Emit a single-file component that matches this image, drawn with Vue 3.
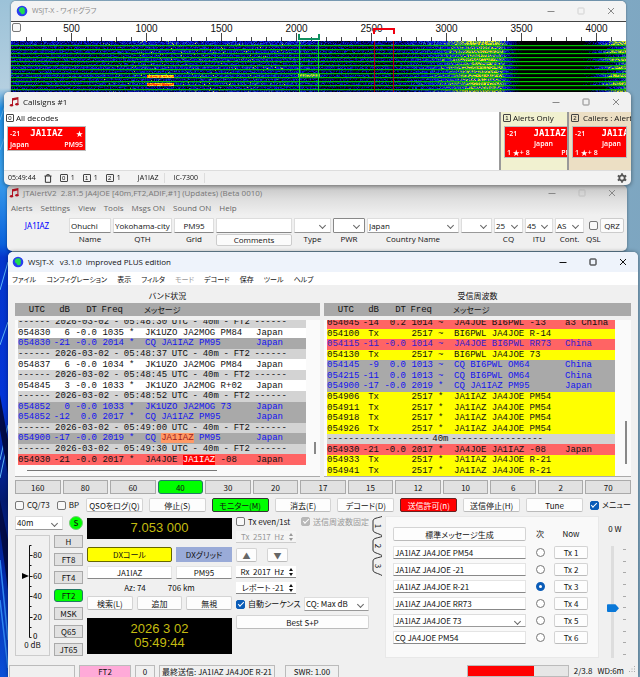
<script setup>
import { h, onMounted, ref } from 'vue'

const WinControls = (props) =>
  h('div', { class: 'win-controls' }, [
    h('button', { type: 'button', 'aria-label': 'Minimize' }, h('svg', { viewBox: '0 0 8 8' }, h('path', { d: 'M.5 4.5h7' }))),
    h('button', { type: 'button', 'aria-label': 'Maximize', class: { faint: props.fixed } }, h('svg', { viewBox: '0 0 8 8' }, h('rect', { x: 1, y: 1, width: 6, height: 6, rx: 0.6 }))),
    h('button', { type: 'button', 'aria-label': 'Close' }, h('svg', { viewBox: '0 0 8 8' }, h('path', { d: 'M1 1l6 6M7 1l-6 6' })))
  ])
WinControls.props = { fixed: Boolean }

const NoteIcon = () =>
  h('svg', { viewBox: '0 0 10 10', width: 10, height: 10 }, [
    h('path', { d: 'M3 1.3 9.4 0v7.4h-1V2.6L4 3.5v5H3z', fill: '#b01020' }),
    h('ellipse', { cx: 2.5, cy: 8.3, rx: 1.7, ry: 1.3, fill: '#b01020' }),
    h('ellipse', { cx: 7.9, cy: 7.3, rx: 1.7, ry: 1.3, fill: '#b01020' })
  ])

const GlobeIcon = () =>
  h('svg', { viewBox: '0 0 12 12', width: 12, height: 12 }, [
    h('circle', { cx: 6, cy: 6, r: 5.3, fill: '#2a3ef0' }),
    h('path', { d: 'M3.5 3.2C5 1.8 7.6 2 8.6 3.4c.8 1.2-.2 2.2.2 3.4.4 1.4-1 2.6-2.4 2.4C4.8 9 5 7.5 3.9 6.9 2.6 6.1 2.5 4.2 3.5 3.2z', fill: '#1fdc50' })
  ])

const waterfall = ref(null)
const freqLabels = [500, 1000, 1500, 2000, 2500, 3000, 3500, 4000]

const stops = [
  [0, 0, 0, 0], [0.18, 0, 0, 90], [0.42, 10, 20, 225], [0.56, 40, 90, 180],
  [0.68, 100, 165, 70], [0.82, 205, 225, 50], [0.95, 250, 230, 40], [1.1, 255, 70, 0]
]
function palette(v) {
  if (v <= 0) return [0, 0, 0]
  for (let i = 1; i < stops.length; i++) {
    if (v <= stops[i][0]) {
      const a = stops[i - 1], b = stops[i]
      const t = (v - a[0]) / (b[0] - a[0])
      return [1, 2, 3].map((k) => a[k] + (b[k] - a[k]) * t)
    }
  }
  return [255, 60, 0]
}
function drawWaterfall(canvas) {
  const ctx = canvas.getContext('2d')
  const w = canvas.width, ht = canvas.height
  const img = ctx.createImageData(w, ht)
  let seed = 7919
  const rnd = () => ((seed = (seed * 1664525 + 1013904223) >>> 0) / 4294967296)
  for (let y = 0; y < ht; y++) {
    const dim = (y % 8 > 4 ? -0.08 : 0.01) + (rnd() - 0.5) * 0.06
    const onset = 568 + (y % 8 > 4 ? 18 : 0) + rnd() * 6
    for (let x = 0; x < w; x++) {
      let base = 0.27 + dim
      let spread = 0.3
      if (x > 120 && x < 290) base += 0.06
      if (x > 290 && x < 400) base -= 0.05
      if (x >= 288 && x <= 307) base += 0.08
      const d = (x - 474) / (x < 474 ? 44 : 28)
      base += 0.5 * Math.exp(-d * d)
      if (x > 490) {
        const fall = Math.min(1, (x - 490) / 24)
        base = base * (1 - fall) - 0.1 * fall
        spread *= 1 - fall * 0.85
      }
      if (x > onset) {
        const rise = Math.min(1, (x - onset) / 34)
        base += 0.85 * rise
        spread = 0.3
      }
      let v = base + (rnd() + rnd() - 1) * spread
      if (rnd() > 0.96 && x < 280 && x > 90) v += 0.35
      const c = palette(v)
      const i = (y * w + x) * 4
      img.data[i] = c[0]
      img.data[i + 1] = c[1]
      img.data[i + 2] = c[2]
      img.data[i + 3] = 255
    }
  }
  ctx.putImageData(img, 0, 0)
  for (let y = 4; y < ht; y += 4) {
    ctx.fillStyle = '#00c400'
    ctx.fillRect(0, y, w, 1)
    ctx.fillStyle = 'rgba(0,110,0,.4)'
    ctx.fillRect(0, y + 1, w, 1)
  }
  const signal = (x0, x1, y0, low) => {
    for (let y = y0; y < y0 + 3; y++) {
      for (let x = x0; x < x1; x++) {
        const c = palette(low + rnd() * 0.25 + (y === y0 + 1 ? 0.1 : 0))
        ctx.fillStyle = `rgb(${c.map(Math.round).join(',')})`
        ctx.fillRect(x, y, 1, 1)
      }
    }
  }
  signal(136, 163, 34, 0.82)
  signal(136, 163, 42, 0.9)
  signal(287, 309, 33, 0.55)
  ctx.fillStyle = '#10d030'
  ctx.fillRect(288, 0, 1, ht)
  ctx.fillRect(307, 0, 1, ht)
  ctx.fillStyle = '#b00008'
  ctx.fillRect(363, 0, 1, ht)
  ctx.fillRect(382, 0, 1, ht)
}
onMounted(() => drawWaterfall(waterfall.value))

const sep = (t) => ({ sep: ['------', '2026-03-02', '-', t, 'UTC', '-', '40m', '-', 'FT2', '------'] })
const line = (utc, db, dt, freq, mark, msg, country, tone) => ({ utc, db, dt, freq, mark, msg: [].concat(msg), country, tone })

const bandRows = [
  sep('05:48:30'),
  line('054830', '6', '-0.0', '1035', '*', 'JK1UZO JA2MOG PM84', 'Japan', ''),
  line('054830', '-21', '-0.0', '2014', '*', 'CQ JA1IAZ PM95', 'Japan', 'gray'),
  sep('05:48:37'),
  line('054837', '6', '-0.0', '1034', '*', 'JK1UZO JA2MOG PM84', 'Japan', ''),
  sep('05:48:45'),
  line('054845', '3', '-0.0', '1033', '*', 'JK1UZO JA2MOG R+02', 'Japan', ''),
  sep('05:48:52'),
  line('054852', '0', '-0.0', '1033', '*', 'JK1UZO JA2MOG 73', 'Japan', 'gray'),
  line('054852', '-12', '0.0', '2017', '*', 'CQ JA1IAZ PM95', 'Japan', 'gray'),
  sep('05:49:00'),
  line('054900', '-17', '-0.0', '2019', '*', ['CQ ', { t: 'JA1IAZ', c: 'mark-orange' }, ' PM95'], 'Japan', 'gray'),
  sep('05:49:30'),
  line('054930', '-21', '-0.0', '2017', '*', ['JA4JOE ', { t: 'JA1IAZ', c: 'mark-red' }, ' -08'], 'Japan', 'red')
]
const rxRows = [
  line('054045', '-14', '0.2', '1014', '~', 'JA4JOE BI6PWL -13', 'a3 China', 'red'),
  line('054100', 'Tx', '', '2517', '~', 'BI6PWL JA4JOE R-14', '', 'yellow'),
  line('054115', '-11', '-0.0', '1014', '~', 'JA4JOE BI6PWL RR73', 'China', 'red blue'),
  line('054130', 'Tx', '', '2517', '~', 'BI6PWL JA4JOE 73', '', 'yellow'),
  line('054145', '-9', '0.0', '1013', '~', 'CQ BI6PWL OM64', 'China', 'gray'),
  line('054215', '-11', '0.0', '1013', '~', 'CQ BI6PWL OM64', 'China', 'gray'),
  line('054900', '-17', '-0.0', '2019', '*', 'CQ JA1IAZ PM95', 'Japan', 'gray'),
  line('054906', 'Tx', '', '2517', '*', 'JA1IAZ JA4JOE PM54', '', 'yellow'),
  line('054911', 'Tx', '', '2517', '*', 'JA1IAZ JA4JOE PM54', '', 'yellow'),
  line('054918', 'Tx', '', '2517', '*', 'JA1IAZ JA4JOE PM54', '', 'yellow'),
  line('054926', 'Tx', '', '2517', '*', 'JA1IAZ JA4JOE PM54', '', 'yellow'),
  { sep: ['-------------------', '40m', '-----------------'], short: true },
  line('054930', '-21', '-0.0', '2017', '*', 'JA4JOE JA1IAZ -08', 'Japan', 'red'),
  line('054933', 'Tx', '', '2517', '*', 'JA1IAZ JA4JOE R-21', '', 'yellow'),
  line('054941', 'Tx', '', '2517', '*', 'JA1IAZ JA4JOE R-21', '', 'yellow')
]
const panes = [
  { title: 'バンド状況', rows: bandRows, cls: 'band' },
  { title: '受信周波数', rows: rxRows, cls: 'rx' }
]

const alertMenu = ['Alerts', 'Settings', 'View', 'Tools', 'Msgs ON', 'Sound ON', 'Help']
const mainMenu = ['ファイル', 'コンフィグレーション', '表示', 'フィルタ', 'モード', 'デコード', '保存', 'ツール', 'ヘルプ']
const bands = ['160', '80', '60', '40', '30', '20', '17', '15', '12', '10', '6', '2', '70']
const actions = [
  { t: 'QSOをログ(Q)' }, { t: '停止(S)' }, { t: 'モニター(M)', c: 'on' }, { t: '消去(E)' },
  { t: 'デコード(D)' }, { t: '送信許可(n)', c: 'tx' }, { t: '送信停止(H)' }, { t: 'Tune' }
]
const modes = ['H', 'FT8', 'FT4', 'FT2', 'MSK', 'Q65', 'JT65']
const messages = ['JA1IAZ JA4JOE PM54', 'JA1IAZ JA4JOE -21', 'JA1IAZ JA4JOE R-21', 'JA1IAZ JA4JOE RR73', 'JA1IAZ JA4JOE 73', 'CQ JA4JOE PM54']
const nextTx = ref(3)
</script>

<template>
  <div class="desktop">
    <svg class="wallpaper" viewBox="0 0 12 677" preserveAspectRatio="none" aria-hidden="true">
      <defs>
        <linearGradient id="wp" x1="0" y1="0" x2="0" y2="1">
          <stop offset="0" stop-color="#9cc2d8" />
          <stop offset=".13" stop-color="#b4cfe0" />
          <stop offset=".16" stop-color="#1f8fe6" />
          <stop offset=".26" stop-color="#3ba0ec" />
          <stop offset=".36" stop-color="#0a62dc" />
          <stop offset=".38" stop-color="#0436cc" />
          <stop offset=".6" stop-color="#0334d8" />
          <stop offset=".74" stop-color="#031a70" />
          <stop offset=".84" stop-color="#0328a8" />
          <stop offset="1" stop-color="#0a50d8" />
        </linearGradient>
      </defs>
      <rect width="12" height="677" fill="url(#wp)" />
      <path d="M0 120 8 96M0 150 8 128M0 290 8 262M0 345 8 322M0 460 8 425M0 478 8 440" stroke="#5db4f4" stroke-width="1" fill="none" />
      <path d="M0 395 8 440 8 475 0 430zM0 500 8 540 8 590 0 530z" fill="#020c48" />
      <path d="M0 560 8 640M0 600 8 668" stroke="#2f86f0" stroke-width="1.5" fill="none" />
    </svg>

    <section class="window graph">
      <header class="titlebar"><GlobeIcon /><h2>WSJT-X - ワイドグラフ</h2><WinControls fixed /></header>
      <div class="ruler">
        <input type="checkbox" class="check" aria-label="Controls">
        <div class="ruler-labels"><span v-for="f in freqLabels" :key="f">{{ f }}</span></div>
        <svg viewBox="0 0 615 19" preserveAspectRatio="none" aria-hidden="true">
          <path v-for="n in 40" :key="n" :d="`M${n * 15 + .5} ${n % 5 === 4 ? 11 : 15}V19`" stroke="#444" />
          <path d="M288 12v5h20v-5" fill="none" stroke="#109060" stroke-width="2" />
          <path d="M363 12V7h20v5" fill="none" stroke="#f00010" stroke-width="2" />
        </svg>
      </div>
      <canvas ref="waterfall" width="615" height="51"></canvas>
    </section>

    <section class="window callsigns">
      <header class="titlebar"><NoteIcon /><h2>Callsigns #1</h2><WinControls /></header>
      <div class="call-panels">
        <div class="call-panel">
          <h3><i class="num">0</i>All decodes</h3>
          <div class="card wide">
            <span>-21</span><b>JA1IAZ</b><span class="end">★</span>
            <div class="foot"><span>Japan</span><span>PM95</span></div>
          </div>
        </div>
        <div class="call-panel alerts">
          <h3><i class="num">1</i>Alerts Only</h3>
          <div class="card tall">
            <span>-21</span><b>JA1IAZ</b>
            <span class="mid">Japan</span>
            <div class="foot"><span>1 ★+ 8</span><span>PM95</span></div>
          </div>
        </div>
        <div class="call-panel callers">
          <h3><i class="num">2</i><svg viewBox="0 0 6 8" width="5" height="7"><path d="M1 .5h4M1.7.5v3.500M4.3.5v3.500M.5 4.500h5M3 4.500v3.500" stroke="#333" fill="none" /></svg>Callers : Alerts</h3>
          <div class="card tall">
            <span>-21</span><b>JA1IAZ</b>
            <span class="mid">Japan</span>
            <div class="foot"><span>1 ★+ 8</span></div>
          </div>
        </div>
      </div>
      <footer class="call-status">
        <span class="time">05:49:44</span>
        <svg viewBox="0 0 8 9" width="8" height="9"><path d="M.5 2h7M2.8 2V.7h2.400V2M1.4 2v6.300h5.200V2" fill="none" stroke="#333" /></svg>
        <span><i class="num">0</i>1</span><span><i class="num">1</i>1</span><span><i class="num">2</i>1</span>
        <span class="cell first">JA1IAZ</span><span class="cell">IC-7300</span>
        <svg class="gear" viewBox="0 0 10 10" width="10" height="10"><circle cx="5" cy="5" r="2.7" fill="none" stroke="#555" stroke-width="1.8" /><path d="M5 .2v1.800M5 8v1.800M.8 2.600l1.600.9M7.600 6.500l1.600.9M.8 7.400l1.600-.9M7.600 3.500l1.600-.9" stroke="#555" stroke-width="1.8" /></svg>
      </footer>
    </section>

    <section class="window jtalert">
      <header class="titlebar"><NoteIcon /><h2>JTAlertV2&nbsp; 2.81.5 JA4JOE [40m,FT2,ADIF,#1] (Updates) (Beta 0010)</h2><WinControls fixed /></header>
      <nav class="alert-menu"><a v-for="m in alertMenu" :key="m" href="#">{{ m }}</a></nav>
      <form class="fields">
        <div class="field"><strong class="callsign">JA1IAZ</strong></div>
        <div class="field"><input id="nm" value="Ohuchi"><label for="nm">Name</label></div>
        <div class="field"><input id="qth" value="Yokohama-city"><label for="qth">QTH</label></div>
        <div class="field"><input id="grid" class="center" value="PM95"><label for="grid">Grid</label></div>
        <div class="field"><input aria-label="Comment text"><button type="button" class="comments">Comments</button></div>
        <div class="field"><span class="sel"><select id="type"><option></option></select></span><label for="type">Type</label></div>
        <div class="field"><span class="sel dark"><select id="pwr"><option></option></select></span><label for="pwr">PWR</label></div>
        <div class="field"><span class="sel"><select id="country"><option>Japan</option></select></span><label for="country">Country Name</label></div>
        <div class="field"><span class="sel"><select aria-label="State"><option></option></select></span></div>
        <div class="field"><span class="sel"><select id="cq"><option>25</option></select></span><label for="cq">CQ</label></div>
        <div class="field"><span class="sel"><select id="itu"><option>45</option></select></span><label for="itu">ITU</label></div>
        <div class="field"><span class="sel"><select id="cont"><option>AS</option></select></span><label for="cont">Cont.</label></div>
        <div class="field"><span class="qsl"><input id="qsl" type="checkbox" class="check"></span><label for="qsl">QSL</label></div>
        <div class="field"><button type="button" class="qrz">QRZ</button></div>
      </form>
    </section>

    <main class="window wsjt">
      <header class="titlebar"><GlobeIcon /><h1>WSJT-X&nbsp;&nbsp; v3.1.0&nbsp; improved PLUS edition</h1><WinControls /></header>
      <nav class="main-menu"><a v-for="m in mainMenu" :key="m" href="#" :class="{ off: m === 'モード' }">{{ m }}</a></nav>

      <div class="body">
        <div class="panes">
          <section v-for="p in panes" :key="p.title" class="pane" :class="p.cls">
            <h2>{{ p.title }}</h2>
            <div class="columns"><span>UTC</span><span>dB</span><span>DT</span><span>Freq</span><span class="m">メッセージ</span></div>
            <div class="log">
              <table>
                <colgroup><col class="c-utc"><col class="c-db"><col class="c-dt"><col class="c-freq"><col class="c-mark"><col class="c-msg"><col class="c-country"></colgroup>
                <tbody>
                  <template v-for="(r, i) in p.rows" :key="i">
                    <tr v-if="r.sep" class="sep"><td colspan="7"><div :class="{ short: r.short }"><span v-for="(s, k) in r.sep" :key="k">{{ s }}</span></div></td></tr>
                    <tr v-else :class="r.tone">
                      <td>{{ r.utc }}</td><td class="r">{{ r.db }}</td><td class="r">{{ r.dt }}</td><td class="r">{{ r.freq }}</td><td class="mk">{{ r.mark }}</td>
                      <td><template v-for="(m, k) in r.msg" :key="k"><mark v-if="m.t" :class="m.c">{{ m.t }}</mark><template v-else>{{ m }}</template></template></td>
                      <td>{{ r.country }}</td>
                    </tr>
                  </template>
                </tbody>
              </table>
              <i class="vbar"></i>
              <i v-if="p.cls === 'band'" class="hbar"></i>
            </div>
          </section>
        </div>

        <div class="bands"><button v-for="b in bands" :key="b" type="button" :class="{ on: b === '40' }">{{ b }}</button></div>

        <div class="actions">
          <label><input type="checkbox" class="check">CQ/73</label>
          <label><input type="checkbox" class="check">BP</label>
          <div class="action-buttons"><button v-for="a in actions" :key="a.t" type="button" class="btn" :class="a.c">{{ a.t }}</button></div>
          <label><input type="checkbox" class="check" checked>メニュー</label>
        </div>

        <div class="controls">
          <div class="left-col">
            <div class="band-row"><span class="sel"><select aria-label="Band"><option>40m</option></select></span><button type="button" class="s-btn">S</button></div>
            <div class="meter-row">
              <div class="meter">
                <svg viewBox="0 0 32 104" width="32" height="104" role="img" aria-label="Input level">
                  <path d="M15.5 9.500h-2v92h2M13.5 19.500h3M13.5 29.500h2M13.5 40.500h3M13.5 50.500h2M13.5 60.500h3M13.5 70.500h2M13.5 81.500h3M13.5 91.500h2" fill="none" stroke="#111" />
                  <path d="M6 37v6l7-3z" fill="#000" />
                  <text x="17" y="22">80</text><text x="17" y="43">60</text><text x="17" y="63">40</text><text x="17" y="84">20</text><text x="17" y="103">0</text>
                </svg>
                <span>0 dB</span>
              </div>
              <div class="modes"><button v-for="m in modes" :key="m" type="button" :class="{ on: m === 'FT2' }">{{ m }}</button></div>
            </div>
          </div>

          <div class="dx-col">
            <output class="lcd freq">7.053 000</output>
            <div class="dx-grid">
              <button id="dxc" type="button" class="dx-call">DXコール</button><button id="dxg" type="button" class="dx-square">DXグリッド</button>
              <input class="line center" aria-labelledby="dxc" value="JA1IAZ"><input class="line center" aria-labelledby="dxg" value="PM95">
            </div>
            <p class="azimuth"><span>Az: 74</span><span>706 km</span></p>
            <div class="lookup"><button type="button" class="btn">検索(L)</button><button type="button" class="btn">追加</button><button type="button" class="btn">無視</button></div>
            <output class="lcd clock"><span>2026 3 02</span><span>05:49:44</span></output>
          </div>

          <div class="tx-col">
            <div class="tx-line"><label><input type="checkbox" class="check">Tx even/1st</label><label class="off"><input type="checkbox" class="check" checked disabled>送信周波数固定</label></div>
            <span class="spin off"><input aria-label="Tx frequency" value="Tx  2517  Hz" disabled><i></i></span>
            <div class="arrows"><button type="button" class="btn" aria-label="Up">▲</button><button type="button" class="btn" aria-label="Down">▼</button></div>
            <span class="spin"><input aria-label="Rx frequency" value="Rx  2017  Hz"><i></i></span>
            <span class="spin"><input aria-label="Report" value="レポート -21"><i></i></span>
            <div class="tx-line auto"><label><input type="checkbox" class="check" checked>自動シーケンス</label><span class="sel boxed"><select aria-label="CQ response"><option>CQ: Max dB</option></select></span></div>
            <button type="button" class="btn best">Best S+P</button>
          </div>

          <div class="tabs"><button v-for="n in 3" :key="n" type="button"><svg viewBox="0 0 10 20" width="10" height="20" aria-hidden="true"><path d="M10 .5C6 2 1 2 1 5v9c0 3 5 3 9 5.500" fill="#f0f0f0" stroke="#333" /></svg><span>{{ n }}</span></button></div>

          <div class="msg-panel">
            <button type="button" class="btn gen">標準メッセージ生成</button><span class="head">次</span><span class="head">Now</span>
            <template v-for="(m, i) in messages" :key="i">
              <span v-if="i === 4" class="sel msg-sel"><select :aria-label="`Tx ${i + 1} message`"><option>{{ m }}</option></select></span>
              <input v-else class="line" :aria-label="`Tx ${i + 1} message`" :value="m">
              <input v-model="nextTx" type="radio" name="next" class="radio" :value="i + 1" :aria-label="`Next Tx ${i + 1}`">
              <button type="button" class="btn tx-n">Tx {{ i + 1 }}</button>
            </template>
          </div>

          <div class="power">
            <label for="pwr-slider">0 W</label>
            <div class="slider"><input id="pwr-slider" type="range" min="0" max="100" value="44"><div class="ticks"><i v-for="n in 10" :key="n"></i></div></div>
          </div>
        </div>
      </div>

      <footer class="statusbar">
        <span class="st blank"></span><span class="st mode">FT2</span><span class="st zero">0</span>
        <span class="st last">最終送信: JA1IAZ JA4JOE R-21</span><span class="st swr">SWR: 1.00</span>
        <progress value="2" max="3">2/3</progress>
        <span class="plain">2/3.8</span><span class="plain">WD:6m</span>
        <svg viewBox="0 0 8 8" width="8" height="8" aria-hidden="true"><path d="M6 1h1v1H6zM6 3.500h1v1H6zM6 6h1v1H6zM3.5 3.500h1v1h-1zM3.5 6h1v1h-1zM1 6h1v1H1z" fill="#aaa" /></svg>
      </footer>
    </main>
  </div>
</template>

<style>
body { margin: 0; }
.win-controls { display: flex; margin-left: auto; }
.win-controls button { width: 30px; height: 16px; padding: 0; border: 0; background: none; color: inherit; display: flex; align-items: center; justify-content: center; }
.win-controls svg { width: 8px; height: 8px; fill: none; stroke: currentColor; stroke-width: 1; }
.win-controls .faint { opacity: .3; }
</style>

<style scoped>
* { box-sizing: border-box; }
.desktop { position: relative; overflow: hidden; min-height: 100vh; padding: 252px 2px 0 8px; background: linear-gradient(100deg, #9cc2d8 0%, #84aec8 60%, #7ba3be 100%); font: 8px/10px "Open Sans", "Noto Sans CJK JP", sans-serif; color: #111; }
.wallpaper { position: absolute; left: 0; top: 0; width: 12px; height: 100%; }
button, input, select { font: inherit; color: inherit; margin: 0; min-width: 0; }
button { padding: 0; white-space: nowrap; }
h1, h2, h3, p { margin: 0; font-weight: 400; font-size: inherit; }
a { color: inherit; text-decoration: none; }
i { font-style: normal; }
.window { border-radius: 5px; overflow: hidden; background: #f0f0f0; }
.titlebar { display: flex; align-items: center; gap: 4px; height: 20px; }
.titlebar h1, .titlebar h2 { white-space: nowrap; }

.graph { position: absolute; top: 1px; left: 11px; right: 14px; border-radius: 5px 5px 0 0; box-shadow: 0 0 2px #456; }
.graph .titlebar { background: #f3f3f3; color: #888; padding-left: 5px; font-feature-settings: "palt"; font-size: 7px; }
.ruler { position: relative; height: 20px; background: #fff; border-top: 1px solid #444; overflow: hidden; }
.ruler svg { position: absolute; left: 0; top: 0; width: 100%; height: 19px; }
.ruler .check { position: absolute; left: 1px; top: 1px; z-index: 1; }
.ruler-labels { display: flex; padding-left: 23px; font: 10px/13px "Liberation Sans", sans-serif; }
.ruler-labels span { flex: 0 0 75px; text-align: center; }
.graph canvas { display: block; width: 100%; height: 51px; }

.callsigns { position: absolute; top: 92px; left: 4px; right: 9px; box-shadow: 0 1px 4px #0007; z-index: 2; background: #f3f3f3; }
.callsigns .titlebar { padding-left: 5px; background: #f1f1f1; }
.callsigns .win-controls, .jtalert .win-controls, .graph .win-controls { color: #888; }
.call-panels { display: flex; height: 58px; background: #fff; }
.call-panel { flex: 1; padding: 0 2px; overflow: hidden; }
.call-panel h3 { display: flex; align-items: center; gap: 2px; height: 12px; white-space: nowrap; }
.alerts { flex: 0 0 68px; background: #f1f1d0; border-left: 2px solid #999; }
.callers { flex: 0 0 64px; background: #ecdfc4; border-left: 2px solid #999; }
.num { flex: none; display: inline-block; width: 8px; height: 8px; border: 1px solid #444; border-radius: 1px; font: 6px/6px "Liberation Sans", sans-serif; text-align: center; }
.card { display: grid; grid-template-columns: 14px 45px 14px; align-items: center; margin: 2px 1px; padding: 1px 2px; border: 1px solid #bbb; background: #f00; color: #fff; width: 79px; font-weight: 600; font-size: 7px; line-height: 9px; }
.card b { font: 700 9px/11px "DejaVu Sans Mono", monospace; text-align: right; }
.wide { height: 25px; }
.wide b { text-align: center; }
.end { text-align: right; }
.foot { grid-column: 1 / 4; display: flex; justify-content: space-between; white-space: nowrap; }
.tall { height: 32px; }
.tall .mid { grid-column: 1 / 4; text-align: center; }
.callers .card { width: 55px; overflow: hidden; }
.call-status { display: flex; align-items: center; gap: 8px; height: 15px; padding: 0 4px; font-size: 7px; border-top: 1px solid #ddd; }
.call-status span { display: flex; align-items: center; gap: 3px; }
.cell { padding-right: 6px; border-right: 1px solid #ddd; }
.cell.first { padding-left: 9px; }
.gear { margin-left: auto; }

.jtalert { position: absolute; top: 185px; left: 7px; right: 13px; height: 66px; box-shadow: 0 1px 3px #0006; background: linear-gradient(#c4c4c4, #dedede 14px, #f0f0f0 30px, #f0f0f0); }
.jtalert .titlebar { height: 16px; padding-left: 2px; color: #777; }
.alert-menu { display: flex; gap: 8px; height: 14px; padding-left: 4px; align-items: center; color: #666; }
.fields { display: grid; grid-template-columns: 60px 42px 59px 40px 76px 37px 32px 92px 31px 29px 28px 29px 12px 24px; gap: 2px; padding: 3px 0 0; justify-content: start; }
.field { display: grid; grid-template-rows: 15px 12px; gap: 1px; }
.field > input { width: 100%; height: 15px; border: 1px solid #ddd; border-bottom-color: #888; background: #fff; padding: 0 1px; border-radius: 1px; }
.center { text-align: center; }
.field label { justify-self: center; white-space: nowrap; }
.callsign { color: #00f; font: 8px/15px "Noto Sans", sans-serif; text-align: center; }
.comments, .qrz { background: #fbfbfb; border: 1px solid #ccc; border-radius: 2px; }
.qsl { display: flex; align-items: center; justify-content: center; }

.sel { position: relative; display: block; height: 15px; background: #fff; border: 1px solid #ddd; border-bottom-color: #999; border-radius: 1px; }
.sel.dark { border-color: #888; }
.sel select { display: block; width: 100%; height: 100%; appearance: none; border: 0; background: none; padding: 0 1px; }
.sel::after { content: ""; position: absolute; right: 5px; top: 4px; width: 4px; height: 4px; border: solid #666; border-width: 0 1px 1px 0; transform: rotate(45deg); pointer-events: none; }
.check { appearance: none; flex: none; width: 9px; height: 9px; border: 1px solid #777; border-radius: 2px; background: #f8f8f8; display: grid; place-items: center; }
.check:checked { background: #0a5cb8; border-color: #0a5cb8; }
.check:checked::after { content: ""; width: 5px; height: 2px; border: solid #fff; border-width: 0 0 1px 1px; transform: rotate(-45deg); margin-top: -2px; }
.check:disabled { background: #b8b8b8; border-color: #b8b8b8; }

.wsjt { position: relative; font-family: "Noto Sans CJK JP", sans-serif; box-shadow: 0 0 4px #0006; border-radius: 5px 5px 0 0; }
.wsjt .titlebar { background: #eef3fb; padding-left: 4px; font-family: "Open Sans", sans-serif; }
.main-menu { display: flex; gap: 10px; height: 13px; padding: 0 4px; align-items: center; background: #fff; font-size: 7px; font-feature-settings: "palt"; }
.off { color: #999; }
.body { padding: 4px 7px 0; }
.panes { display: grid; grid-template-columns: 305px 1fr; gap: 4px; }
.pane h2 { height: 14px; line-height: 13px; text-align: center; font-feature-settings: "palt"; }
.columns { display: grid; grid-template-columns: 30px 25px 27px 26px 1fr; height: 13px; align-items: center; background: #a9a9a9; font: 9px/12px "Liberation Mono", monospace; text-align: right; }
.columns span { white-space: nowrap; }
.columns .m { text-align: left; padding-left: 21px; font-family: "Noto Sans CJK JP", sans-serif; font-size: 8px; font-feature-settings: "palt"; }
.log { position: relative; display: flex; align-items: flex-end; height: 157px; margin-top: 4px; padding-left: 3px; overflow: hidden; border-bottom: 1px solid #aaa; background: #fafafa; }
.log table { width: 288px; border-collapse: collapse; table-layout: fixed; font: 9px/10px "Liberation Mono", monospace; background: #fff; }
.band table { height: 148px; margin-bottom: 11px; }
.rx table { height: 158px; }
.c-utc { width: 33px; } .c-db { width: 19px; } .c-dt { width: 27px; } .c-freq { width: 27px; } .c-mark { width: 21px; } .c-msg { width: 111px; } .c-country { width: 50px; }
td { padding: 0; white-space: pre; }
.r { text-align: right; }
.mk { padding-left: 5px; }
.gray { background: #a9a9a9; color: #1414f0; }
.red { background: #ff6464; }
.red.blue { color: #3020d0; }
.yellow { background: #ff0; }
.sep { background: #d3d3d3; }
.sep div { display: flex; justify-content: space-between; width: 269px; }
.sep .short { width: 216px; }
mark { color: inherit; }
.mark-orange { background: #ff9966; color: #a02020; }
.mark-red { background: #f00; color: #fff; }
.vbar { position: absolute; right: 4px; bottom: 22px; width: 2px; height: 12px; background: #888; }
.rx .vbar { bottom: 12px; height: 43px; }
.hbar { position: absolute; left: 12px; bottom: 5px; width: 190px; height: 1px; background: #777; }

.bands { display: grid; grid-template-columns: repeat(13, 1fr); gap: 2px; margin-top: 3px; }
.bands button, .modes button { height: 14px; border: 1px solid #aaa; background: #e1e1e1; line-height: 11px; }
.bands .on, .modes .on { background: #0f0; border-color: #276; border-radius: 3px; }
.actions { display: flex; align-items: center; gap: 7px; margin-top: 4px; font-feature-settings: "palt"; }
.actions label, .tx-line label { display: flex; align-items: center; gap: 3px; white-space: nowrap; }
.action-buttons { flex: 1; display: grid; grid-template-columns: repeat(8, 1fr); gap: 6px; }
.btn { height: 14px; border: 1px solid #d4d4d4; border-bottom-color: #bbb; border-radius: 2px; background: #fdfdfd; line-height: 11px; font-feature-settings: "palt"; }
.btn.on { background: #0f0; border-color: #333; }
.btn.tx { background: #f00; border-color: #622; color: #fff; }

.controls { display: grid; grid-template-columns: 68px 149px 139px 14px 214px 1fr; margin-top: 4px; height: 141px; }
.band-row { display: flex; align-items: center; justify-content: space-between; width: 68px; }
.band-row .sel { width: 48px; height: 14px; }
.s-btn { width: 14px; height: 14px; border: 1px solid #7c7; border-radius: 50%; background: #0f0; font-weight: 500; line-height: 12px; }
.meter-row { display: flex; justify-content: space-between; margin-top: 5px; }
.meter { width: 35px; height: 121px; border: 1px solid #ccc; text-align: center; }
.meter svg, .meter span { display: block; }
.meter text { font-size: 8px; }
.modes { display: grid; gap: 5px; width: 29px; align-content: space-between; }
.modes button { height: 13px; line-height: 10px; }

.dx-col { display: flex; flex-direction: column; margin-left: 4px; }
.lcd { display: block; background: #000; color: #c4bc10; text-align: center; font: 13px/20px "Liberation Sans", sans-serif; }
.freq { margin-top: 2px; height: 21px; }
.dx-grid { display: grid; grid-template-columns: 85px 1fr; gap: 4px; margin-top: 8px; }
.dx-grid button { height: 15px; line-height: 12px; font-feature-settings: "palt"; }
.dx-call { background: #ff0; border: 1px solid #660; border-radius: 2px; }
.dx-square { background: #9aabd8; border: 0; }
.line { width: 100%; height: 13px; padding: 0 1px; border: 1px solid #e4e4e4; border-bottom-color: #888; background: #fff; }
.azimuth { display: flex; justify-content: center; gap: 22px; padding-top: 4px; height: 17px; }
.lookup { display: grid; grid-template-columns: repeat(3, 1fr); gap: 4px; }
.clock { display: flex; flex-direction: column; margin-top: 8px; padding: 4px 0; line-height: 14px; }

.tx-col { display: flex; flex-direction: column; align-items: flex-start; padding-left: 4px; }
.tx-line { display: flex; justify-content: space-between; width: 133px; height: 11px; font-feature-settings: "palt"; }
.spin { position: relative; display: block; width: 60px; height: 12px; margin-top: 4px; background: #fff; border-bottom: 1px solid #888; }
.spin input { width: 100%; height: 11px; border: 0; padding: 0 12px 0 1px; background: none; text-align: right; white-space: pre; font-feature-settings: "palt"; }
.spin.off { background: #f4f4f4; border-color: #ccc; }
.spin i::before, .spin i::after { content: ""; position: absolute; right: 3px; border: 2px solid transparent; }
.spin i::before { top: 0; border-bottom: 3px solid currentColor; }
.spin i::after { bottom: -1px; border-top: 3px solid currentColor; }
.arrows { display: flex; gap: 10px; margin-top: 5px; }
.arrows .btn { width: 21px; color: #666; }
.auto { align-items: center; height: 14px; margin-top: 3px; }
.boxed { width: 65px; height: 14px; }
.best { width: 133px; margin-top: 4px; }

.tabs { padding-left: 1px; }
.tabs button { position: relative; display: block; width: 10px; height: 20px; border: 0; background: none; }
.tabs span { position: absolute; inset: 5px 0 0 2px; width: 8px; height: 10px; transform: rotate(90deg); }
.msg-panel { display: grid; grid-template-columns: 133px 28px 34px; grid-template-rows: 20px repeat(6, 17px); align-items: center; background: #f9f9f9; border: 1px solid #e8e8e8; padding: 7px 0 0 7px; align-content: start; }
.head { text-align: center; }
.radio { appearance: none; justify-self: center; width: 9px; height: 9px; border: 1px solid #777; border-radius: 50%; background: #fff; }
.radio:checked { border: 3px solid #0a5cb8; }
.msg-sel { height: 13px; }
.tx-n { height: 13px; line-height: 10px; }
.power { display: flex; flex-direction: column; align-items: center; padding-top: 8px; }
.slider { display: flex; height: 112px; margin-top: 12px; padding-left: 3px; }
.slider input { appearance: none; width: 12px; height: 112px; writing-mode: vertical-lr; direction: rtl; background: linear-gradient(90deg, transparent 4px, #ddd 4px, #ddd 7px, transparent 7px); }
.slider input::-webkit-slider-thumb { appearance: none; width: 12px; height: 8px; background: #0a78d8; border-radius: 1px; clip-path: polygon(0 0, 70% 0, 100% 50%, 70% 100%, 0 100%); }
.ticks { display: flex; flex-direction: column; justify-content: space-between; padding: 3px 0; }
.ticks i { width: 3px; height: 1px; margin-left: 4px; background: #aaa; }

.statusbar { display: flex; align-items: flex-start; gap: 4px; height: 20px; padding: 8px 2px 0 1px; }
.st { height: 12px; line-height: 11px; border: 1px solid #bbb; border-bottom: 0; text-align: center; white-space: nowrap; }
.blank { width: 66px; }
.mode { width: 52px; background: #ffaad8; }
.zero { width: 20px; }
.last { width: 116px; }
.swr { width: 54px; margin-left: 6px; }
progress { appearance: none; height: 12px; width: 102px; margin-left: auto; border: 1px solid #bbb; background: #e6e6e6; }
progress::-webkit-progress-bar { background: #e6e6e6; }
progress::-webkit-progress-value { background: #f00; }
.plain { margin-left: 1px; line-height: 11px; }
</style>
